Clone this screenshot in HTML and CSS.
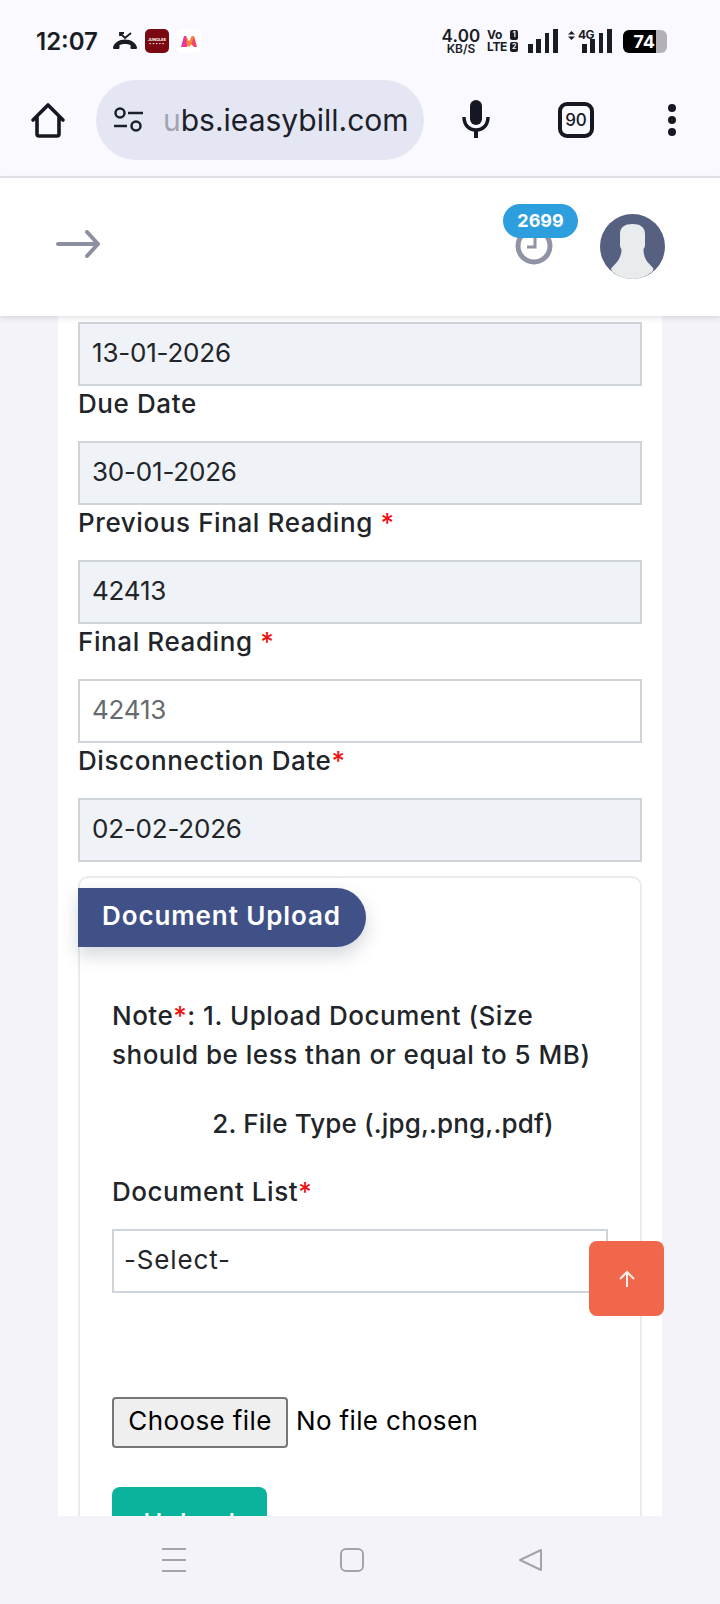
FILE: index.html
```html
<!DOCTYPE html>
<html lang="en">
<head>
<meta charset="utf-8">
<title>ubs.ieasybill.com</title>
<link rel="stylesheet" href="styles.css">
</head>
<body>
<div class="app">
  <div class="statusbar">
    <div class="status-left">
      <span class="time">12:07</span>
      <svg class="ic-call" viewBox="0 0 24 18"><path d="M0 15.500C1 11 6 7.500 12 7.500S23 11 24 15.500c0 1-.500 1.500-1.500 1.500h-3.500c-1 0-1.500-.500-1.500-1.500v-2.500c-3-1.500-8-1.500-11 0v2.500c0 1-.500 1.500-1.500 1.500H1.500C.500 17 0 16.500 0 15.500z" fill="#1a1c24"/><path d="M7 4V1h4M7 1l5 5 6-5" fill="none" stroke="#1a1c24" stroke-width="1.800"/></svg>
      <span class="tile tile-red"><span class="tile-top">JUNGLEE</span><span class="tile-sub">▪▪▪▪▪</span></span>
      <span class="tile tile-white"><svg class="ic-m" viewBox="0 0 16 12"><path d="M0 12L3 1h2l3 6-2 5z" fill="#e8389b"/><path d="M8 7l3-6h2l3 11h-3L8 7z" fill="#f0486a"/><path d="M5 1l3 6 3-6 2 0-3 9-2 2-2-2z" fill="#fb8a2e"/></svg></span>
    </div>
    <div class="status-right">
      <div class="speed"><span class="speed-n">4.00</span><span class="speed-u">KB/S</span></div>
      <div class="volte"><span class="volte-a">Vo<i class="sim">1</i></span><span class="volte-b">LTE<i class="sim sim-b">2</i></span></div>
      <svg class="ic-signal" viewBox="0 0 30 24"><path d="M0 15h5v9H0zM8 10h5v14H8zM17 4h4v20h-4zM25 0h5v24h-5z" fill="#1a1c24"/></svg>
      <div class="net">
        <span class="net-label"><svg class="ic-updown" viewBox="0 0 7 9"><path d="M3.500 0L7 3.500H0zM3.500 9L0 5.500h7z" fill="#1a1c24"/></svg>4G</span>
        <svg class="ic-signal" viewBox="0 0 30 24"><path d="M0 15h5v9H0zM8 10h5v14H8zM17 4h4v20h-4zM25 0h5v24h-5z" fill="#1a1c24"/></svg>
      </div>
      <div class="battery"><span class="battery-level">74</span><span class="battery-rest"></span></div>
    </div>
  </div>

  <div class="toolbar">
    <svg class="ic-home" viewBox="0 0 36 36"><path d="M3 18L18 3l15 15M7 15v17a2 2 0 0 0 2 2h18a2 2 0 0 0 2-2V15" fill="none" stroke="#151823" stroke-width="3.600" stroke-linejoin="round" stroke-linecap="round"/></svg>
    <div class="omnibox">
      <svg class="ic-tune" viewBox="0 0 30 26"><circle cx="7" cy="6" r="4.500" fill="none" stroke="#1c2029" stroke-width="2.500"/><circle cx="23" cy="19" r="4.500" fill="none" stroke="#1c2029" stroke-width="2.500"/><path d="M15 6h15M1 19h13" stroke="#1c2029" stroke-width="2.500"/></svg>
      <span class="url"><span class="url-fade">u</span>bs.ieasybill.com</span>
    </div>
    <svg class="ic-mic" viewBox="0 0 28 38"><rect x="8" y="0" width="12" height="25" rx="6" fill="#151823"/><path d="M2 17c0 8 5 13 12 13s12-5 12-13" fill="none" stroke="#151823" stroke-width="3.500"/><path d="M14 29v9" stroke="#151823" stroke-width="4"/></svg>
    <div class="tabs">90</div>
    <div class="dots"><span class="dot"></span><span class="dot"></span><span class="dot"></span></div>
  </div>

  <header class="apphead">
    <svg class="ic-arrow" viewBox="0 0 44 28"><path d="M2 14h40M31 2l11 12-11 12" fill="none" stroke="#8b8fa0" stroke-width="4" stroke-linecap="round" stroke-linejoin="round"/></svg>
    <div class="head-right">
      <div class="clock">
        <svg class="ic-clock" viewBox="0 0 38 38"><circle cx="19" cy="19" r="16" fill="none" stroke="#8f93a3" stroke-width="5"/><path d="M20 10v10h-8" fill="none" stroke="#8f93a3" stroke-width="3"/></svg>
        <span class="badge">2699</span>
      </div>
      <svg class="avatar" viewBox="0 0 65 65"><circle cx="32.500" cy="32.500" r="32.500" fill="#566080"/><path d="M20 20c0-7 5-10 12.500-10S45 13 45 20v11c0 3-1.500 3-1.500 5 0 4 1.500 9 4 12l6 6.500-1 3A32.500 32.500 0 0 1 32.500 65 32.500 32.500 0 0 1 12 57.500l-1-3 6-6.500c2.500-3 4.500-8 4.500-12 0-2-1.500-2-1.500-5z" fill="#e8ecec"/></svg>
    </div>
  </header>

  <main class="viewport">
    <section class="card">
      <input class="field field-ro" value="13-01-2026" readonly>
      <label class="lbl">Due Date</label>
      <input class="field field-ro" value="30-01-2026" readonly>
      <label class="lbl">Previous Final Reading <span class="req">*</span></label>
      <input class="field field-ro" value="42413" readonly>
      <label class="lbl">Final Reading <span class="req">*</span></label>
      <input class="field field-ph" placeholder="42413">
      <label class="lbl">Disconnection Date<span class="req">*</span></label>
      <input class="field field-ro" value="02-02-2026" readonly>

      <div class="panel">
        <div class="panel-title">Document Upload</div>
        <p class="note">Note<span class="req">*</span>: 1. Upload Document (Size should be less than or equal to 5 MB)</p>
        <p class="note note-center">2. File Type (.jpg,.png,.pdf)</p>
        <label class="lbl-doc">Document List<span class="req">*</span></label>
        <select class="picker"><option>-Select-</option></select>
        <div class="filepick"><button class="filebtn" type="button">Choose file</button><span class="filename">No file chosen</span></div>
        <button class="upload" type="button">Upload</button>
      </div>
    </section>
    <button class="totop" type="button" aria-label="Back to top"><svg class="ic-up" viewBox="0 0 18 18"><path d="M9 17V2M2 9l7-7 7 7" fill="none" stroke="#fdf0ec" stroke-width="2"/></svg></button>
  </main>

  <nav class="navbar">
    <svg class="nav-ic" viewBox="0 0 24 24"><path d="M0 1h24M0 12h24M0 23h24" stroke="#a3a3a9" stroke-width="2"/></svg>
    <svg class="nav-ic" viewBox="0 0 24 24"><rect x="1" y="1" width="22" height="22" rx="5" fill="none" stroke="#a3a3a9" stroke-width="2"/></svg>
    <svg class="nav-ic" viewBox="0 0 24 24"><path d="M23 2v20L2 12z" fill="none" stroke="#a3a3a9" stroke-width="2" stroke-linejoin="round"/></svg>
  </nav>
</div>
</body>
</html>
```

FILE: styles.css
```css
* { box-sizing: border-box; }
html, body { margin: 0; padding: 0; }
body { font-family: "Inter", "Liberation Sans", sans-serif; color: #212529; }
.app { width: 720px; height: 1604px; display: flex; flex-direction: column; overflow: hidden; background: #f3f3f9; }

.statusbar { height: 80px; flex: none; background: #f9f9ff; display: flex; justify-content: space-between; align-items: center; padding: 2px 53px 0 36px; color: #1a1c24; }
.status-left, .status-right { display: flex; align-items: center; }
.time { font-size: 24px; font-weight: 600; width: 77px; }
.ic-call { width: 24px; height: 18px; margin-right: 8px; }
.tile { width: 24px; height: 24px; border-radius: 5px; display: flex; flex-direction: column; align-items: center; justify-content: center; margin-right: 8px; overflow: hidden; }
.tile-red { background: #7b0710; color: #fff; }
.tile-top { font-size: 4px; font-weight: 700; line-height: 5px; white-space: nowrap; }
.tile-sub { font-size: 4px; line-height: 4px; letter-spacing: 1px; white-space: nowrap; }
.tile-white { background: #fff; }
.ic-m { width: 16px; height: 12px; }
.speed { display: flex; flex-direction: column; align-items: center; width: 42px; margin-right: 5px; }
.speed-n { font-size: 17px; font-weight: 600; line-height: 14px; letter-spacing: .2px; }
.speed-u { font-size: 12px; font-weight: 600; line-height: 11px; }
.volte { display: flex; flex-direction: column; width: 31px; margin-right: 10px; font-weight: 700; }
.volte-a, .volte-b { display: flex; justify-content: space-between; align-items: center; font-size: 12px; line-height: 12px; letter-spacing: -.3px; }
.sim { width: 8px; height: 10px; background: #1a1c24; color: #f9f9ff; border-radius: 2px; font-size: 7px; line-height: 10px; text-align: center; font-style: normal; }
.ic-signal { width: 30px; height: 24px; }
.net { display: flex; align-items: flex-start; margin-left: 10px; margin-right: 11px; }
.net-label { display: flex; align-items: center; font-size: 12px; font-weight: 700; line-height: 12px; width: 14px; white-space: nowrap; letter-spacing: -.5px; }
.ic-updown { width: 7px; height: 9px; margin-right: 3px; flex: none; }
.battery { display: flex; width: 44px; height: 23px; }
.battery-level { width: 33px; background: #000; color: #fff; border-radius: 6px 0 0 6px; font-size: 18px; font-weight: 700; line-height: 23px; text-align: right; padding-right: 1px; white-space: nowrap; }
.battery-rest { width: 11px; background: #b3b1b6; border-radius: 0 6px 6px 0; }

.toolbar { height: 98px; flex: none; background: #f9f9ff; border-bottom: 2px solid #e3e3ec; display: flex; align-items: flex-start; padding-left: 30px; position: relative; }
.ic-home { width: 36px; height: 36px; margin: 22px 30px 0 0; flex: none; }
.omnibox { width: 328px; height: 80px; background: #e4e7f3; border-radius: 40px; display: flex; align-items: center; padding-left: 17px; flex: none; }
.ic-tune { width: 30px; height: 26px; flex: none; margin-right: 20px; }
.url { font-size: 30px; color: #1c2029; white-space: nowrap; }
.url-fade { color: #a0a4b0; }
.ic-mic { width: 28px; height: 38px; margin: 20px 0 0 38px; flex: none; }
.tabs { width: 36px; height: 36px; border: 4px solid #151823; border-radius: 9px; margin: 22px 0 0 68px; font-size: 17px; font-weight: 500; line-height: 28px; text-align: center; color: #151823; flex: none; }
.dots { display: flex; flex-direction: column; gap: 4px; margin: 24px 0 0 74px; }
.dot { width: 8px; height: 8px; border-radius: 50%; background: #151823; }

.apphead { height: 138px; flex: none; background: #fff; display: flex; justify-content: space-between; align-items: flex-start; padding: 35px 55px 0 56px; box-shadow: 0 2px 6px rgba(0,0,0,.12); position: relative; z-index: 2; }
.ic-arrow { width: 44px; height: 28px; margin-top: 17px; }
.head-right { display: flex; align-items: flex-start; }
.clock { position: relative; width: 38px; height: 38px; margin: 14px 47px 0 0; }
.ic-clock { width: 38px; height: 38px; display: block; }
.badge { position: absolute; left: -12px; top: -23px; width: 75px; height: 34px; border-radius: 17px; background: #2d9fdf; color: #fff; font-size: 18px; font-weight: 700; line-height: 34px; text-align: center; }
.avatar { width: 65px; height: 65px; margin-top: 1px; }

.viewport { flex: 1; position: relative; overflow: hidden; padding: 0 58px; min-height: 0; }
.card { background: #fff; padding: 6px 20px 0; height: 100%; display: flex; flex-direction: column; align-items: stretch; }
.field { display: block; width: 100%; height: 64px; flex: none; border: 2px solid #ced4da; padding: 0 12px 4px; font: 400 26px "Inter", "Liberation Sans", sans-serif; letter-spacing: -.2px; color: #212529; outline: none; border-radius: 0; }
.field-ro { background: #eff2f7; }
.field-ph { background: #fff; }
.field-ph::placeholder { color: #666a6e; opacity: 1; }
.lbl { display: block; flex: none; font-size: 26px; font-weight: 500; letter-spacing: .6px; line-height: 36px; margin-bottom: 19px; color: #212529; }
.req { color: #f01010; }

.panel { margin-top: 14px; border: 2px solid #e9ecef; border-bottom: 0; border-radius: 10px 10px 0 0; padding: 10px 32px 0; flex: none; }
.panel-title { width: 288px; height: 59px; margin-left: -34px; background: #3f5187; color: #fff; border-radius: 0 30px 30px 0; font-size: 26px; font-weight: 600; letter-spacing: .9px; line-height: 55px; padding-left: 24px; box-shadow: 0 8px 18px rgba(60,70,90,.22); white-space: nowrap; }
.note { margin: 49px 0 0; font-size: 26px; font-weight: 500; letter-spacing: .5px; line-height: 39px; color: #212529; }
.note-center { margin-top: 30px; text-align: center; letter-spacing: .15px; padding-left: 46px; }
.lbl-doc { display: block; margin-top: 29px; font-size: 26px; font-weight: 500; letter-spacing: .55px; line-height: 39px; }
.picker { display: block; width: 100%; height: 64px; margin-top: 18px; border: 2px solid #ced4da; background: #fff; padding: 0 10px 4px; font: 400 26px "Inter", "Liberation Sans", sans-serif; letter-spacing: .85px; color: #212529; appearance: none; border-radius: 0; outline: none; }
.filepick { display: flex; align-items: center; margin-top: 104px; height: 51px; font-size: 26px; color: #000; }
.filebtn { height: 51px; width: 176px; padding: 0 0 4px; margin-right: 8px; border: 2px solid #767676; border-radius: 4px; background: #efefef; font: 400 26px "Inter", "Liberation Sans", sans-serif; letter-spacing: .4px; color: #000; flex: none; }
.filename { letter-spacing: .35px; padding-bottom: 4px; }
.upload { display: block; width: 155px; height: 70px; margin-top: 39px; border: 0; border-radius: 8px; background: #0ab39c; color: #fff; font: 500 26px "Inter", "Liberation Sans", sans-serif; letter-spacing: .6px; }

.totop { position: absolute; left: 589px; top: 925px; width: 75px; height: 75px; border: 0; border-radius: 8px; background: #f1674b; padding: 0; display: flex; align-items: center; justify-content: center; }
.ic-up { width: 18px; height: 18px; }

.navbar { height: 88px; flex: none; background: #f3f3f9; display: flex; align-items: center; gap: 154px; padding-left: 162px; position: relative; z-index: 2; }
.nav-ic { width: 24px; height: 24px; }
```
